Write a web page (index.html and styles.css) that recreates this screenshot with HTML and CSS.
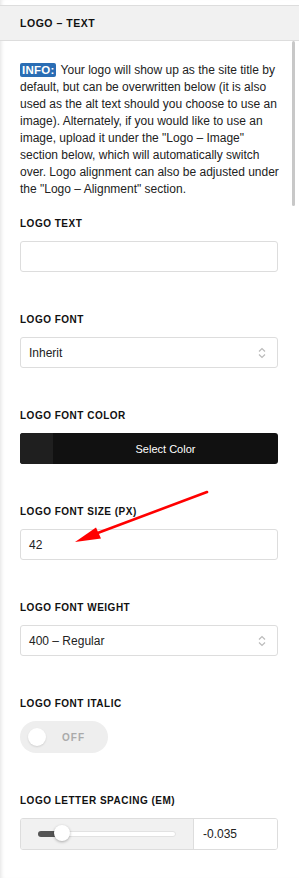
FILE: index.html
```html
<!DOCTYPE html>
<html lang="en">

<head>
    <meta charset="UTF-8">
    <meta name="viewport" content="width=device-width, initial-scale=1.0">
    <title>Logo – Text</title>
    <link rel="stylesheet" href="styles.css">
</head>

<body>
    <div class="panel">
        <div class="head">LOGO – TEXT</div>

        <div class="body">
            <p class="info"><span class="tag">INFO:</span> Your logo will show up as the site title by default, but can be overwritten below (it is also used as the alt text should you choose to use an image). Alternately, if you would like to use an image, upload it under the "Logo – Image" section below, which will automatically switch over. Logo alignment can also be adjusted under the "Logo – Alignment" section.</p>

            <div class="field">
                <label>LOGO TEXT</label>
                <div class="box"></div>
            </div>

            <div class="field">
                <label>LOGO FONT</label>
                <div class="box select">
                    <span>Inherit</span>
                    <svg width="8" height="12" viewBox="0 0 8 12"><path d="M1 4.5 4 1.5 7 4.5M1 7.5 4 10.5 7 7.5" fill="none" stroke="#bbb" stroke-width="1.2"/></svg>
                </div>
            </div>

            <div class="field">
                <label>LOGO FONT COLOR</label>
                <div class="color">
                    <div class="swatch"></div>
                    <div class="pick">Select Color</div>
                </div>
            </div>

            <div class="field">
                <label>LOGO FONT SIZE (PX)</label>
                <div class="box"><span>42</span></div>
            </div>

            <div class="field">
                <label>LOGO FONT WEIGHT</label>
                <div class="box select">
                    <span>400 – Regular</span>
                    <svg width="8" height="12" viewBox="0 0 8 12"><path d="M1 4.5 4 1.5 7 4.5M1 7.5 4 10.5 7 7.5" fill="none" stroke="#bbb" stroke-width="1.2"/></svg>
                </div>
            </div>

            <div class="field">
                <label>LOGO FONT ITALIC</label>
                <div class="toggle">
                    <div class="knob"></div>
                    <span>OFF</span>
                </div>
            </div>

            <div class="field">
                <label>LOGO LETTER SPACING (EM)</label>
                <div class="range">
                    <div class="slide">
                        <div class="track">
                            <div class="fill"></div>
                            <div class="thumb"></div>
                        </div>
                    </div>
                    <div class="num">-0.035</div>
                </div>
            </div>
        </div>

        <div class="scroll"></div>

        <svg class="arrow" width="299" height="878" viewBox="0 0 299 878">
            <line x1="207" y1="492" x2="95" y2="534" stroke="#f00" stroke-width="2.6" stroke-linecap="round"/>
            <polygon points="75,542 96,527.5 101,538.5" fill="#f00"/>
        </svg>
    </div>
</body>

</html>
```

FILE: styles.css
```css
* {
    margin: 0;
    padding: 0;
    box-sizing: border-box;
}

body {
    background: #fff;
    font-family: "Liberation Sans", Arial, sans-serif;
    color: #222;
}

.panel {
    position: relative;
    width: 299px;
    height: 878px;
    overflow: hidden;
    padding-top: 5px;
    box-shadow: inset 4px 0 4px -3px rgba(0, 0, 0, 0.12);
}

.head {
    height: 36px;
    line-height: 34px;
    padding-left: 20px;
    background: #f1f1f1;
    border-top: 1px solid #ddd;
    border-bottom: 1px solid #ddd;
    font-size: 10.5px;
    font-weight: 700;
    letter-spacing: 0.05em;
    color: #111;
}

.body {
    padding: 21px 21px 0 20px;
}

.info {
    font-size: 12px;
    line-height: 17px;
    color: #222;
    margin-right: -6px;
    margin-bottom: 20px;
}

.tag {
    display: inline-block;
    background: #2a6db4;
    color: #fff;
    font-weight: 700;
    font-size: 11.5px;
    line-height: 14px;
    padding: 0 2px;
    margin-right: 1px;
    border-radius: 2px;
    letter-spacing: 0.02em;
}

.field {
    margin-bottom: 42px;
}

.field label {
    display: block;
    font-size: 10px;
    line-height: 12px;
    font-weight: 700;
    letter-spacing: 0.05em;
    color: #111;
    margin-bottom: 11px;
}

.box {
    height: 31px;
    border: 1px solid #ddd;
    border-radius: 3px;
    background: #fff;
    display: flex;
    align-items: center;
    padding: 0 11px 0 8px;
    font-size: 12px;
    color: #222;
}

.select {
    justify-content: space-between;
}

.color {
    height: 31px;
    display: flex;
    border-radius: 3px;
    overflow: hidden;
    background: #111;
}

.swatch {
    width: 33px;
    background: #1f1f1f;
}

.pick {
    flex: 1;
    display: flex;
    align-items: center;
    justify-content: center;
    color: #fff;
    font-size: 11px;
}

.toggle {
    width: 88px;
    height: 32px;
    border-radius: 16px;
    background: #eee;
    display: flex;
    align-items: center;
    padding-left: 8px;
    gap: 16px;
}

.knob {
    width: 18px;
    height: 18px;
    border-radius: 50%;
    background: #fff;
    box-shadow: 0 1px 2px rgba(0, 0, 0, 0.12);
}

.toggle span {
    font-size: 10px;
    font-weight: 700;
    letter-spacing: 0.1em;
    color: #aaa;
}

.range {
    height: 32px;
    display: flex;
    border: 1px solid #ddd;
    border-radius: 3px;
    overflow: hidden;
}

.slide {
    width: 173px;
    background: #f1f1f1;
    border-right: 1px solid #ddd;
    display: flex;
    align-items: center;
    padding-left: 17px;
}

.track {
    position: relative;
    width: 138px;
    height: 6px;
    border-radius: 3px;
    background: #fff;
    border: 1px solid #e2e2e2;
}

.fill {
    width: 24px;
    height: 6px;
    margin-top: -1px;
    margin-left: -1px;
    border-radius: 3px;
    background: #555;
}

.thumb {
    position: absolute;
    left: 15px;
    top: -7px;
    width: 16px;
    height: 16px;
    border-radius: 50%;
    background: #fff;
    box-shadow: 0 1px 3px rgba(0, 0, 0, 0.3);
}

.num {
    flex: 1;
    display: flex;
    align-items: center;
    padding-left: 9px;
    font-size: 12px;
    background: #fff;
}

.scroll {
    position: absolute;
    left: 292px;
    top: 41px;
    width: 3px;
    height: 165px;
    background: #c8c8c8;
    border-radius: 2px;
}

.arrow {
    position: absolute;
    left: 0;
    top: 0;
    pointer-events: none;
}
```
